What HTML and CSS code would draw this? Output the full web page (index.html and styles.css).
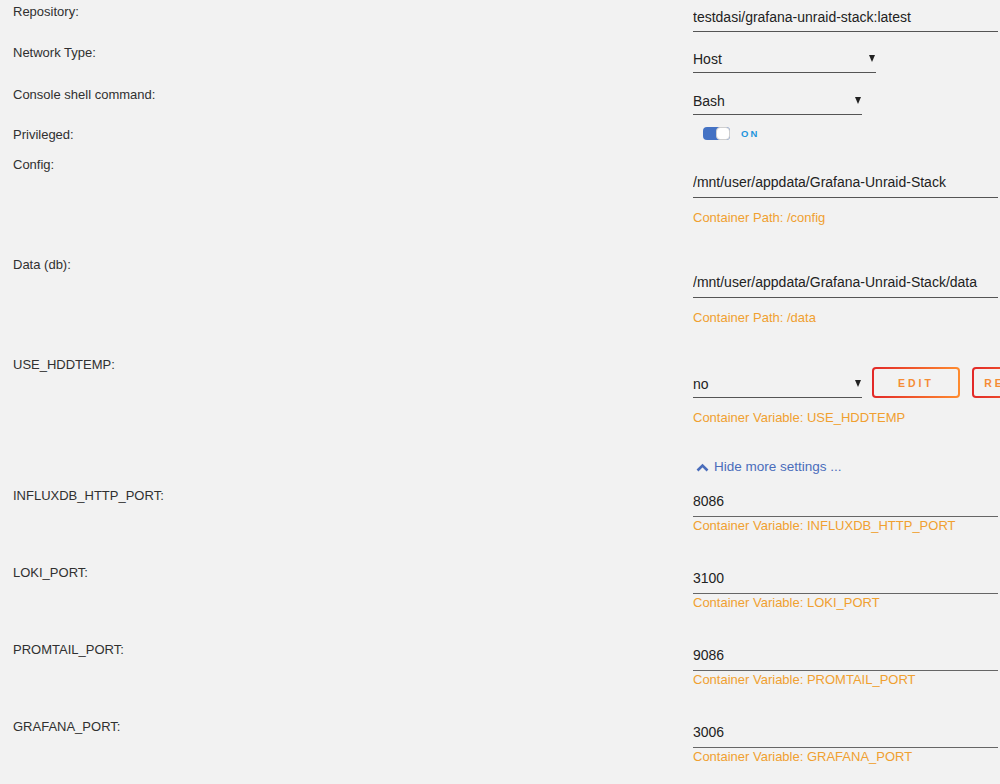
FILE: index.html
```html
<!DOCTYPE html>
<html lang="en">
<head>
  <meta charset="UTF-8" />
  <title>Update Container</title>
  <meta name="viewport" content="width=device-width, initial-scale=1" />
  <link rel="stylesheet" href="styles.css">
</head>
<body>

  <div class="form">

    <div class="row r-repo">
      <div class="label">Repository:</div>
      <div class="field">
        <input type="text" class="text wide" value="testdasi/grafana-unraid-stack:latest" />
      </div>
    </div>

    <div class="row r-net">
      <div class="label">Network Type:</div>
      <div class="field">
        <div class="select host"><span>Host</span></div>
      </div>
    </div>

    <div class="row r-shell">
      <div class="label">Console shell command:</div>
      <div class="field">
        <div class="select short"><span>Bash</span></div>
      </div>
    </div>

    <div class="row r-priv">
      <div class="label">Privileged:</div>
      <div class="field">
        <div class="switch">
          <span class="track"><span class="knob"></span></span>
          <span class="switch-text">ON</span>
        </div>
      </div>
    </div>

    <div class="row big">
      <div class="label">Config:</div>
      <div class="field">
        <input type="text" class="text wide" value="/mnt/user/appdata/Grafana-Unraid-Stack" />
        <div class="desc spaced">Container Path: /config</div>
      </div>
    </div>

    <div class="row big">
      <div class="label">Data (db):</div>
      <div class="field">
        <input type="text" class="text wide" value="/mnt/user/appdata/Grafana-Unraid-Stack/data" />
        <div class="desc spaced">Container Path: /data</div>
      </div>
    </div>

    <div class="row big r-hdd">
      <div class="label">USE_HDDTEMP:</div>
      <div class="field">
        <div class="inline">
          <div class="select short"><span>no</span></div>
          <button class="btn">EDIT</button>
          <button class="btn">REMOVE</button>
        </div>
        <div class="desc spaced">Container Variable: USE_HDDTEMP</div>
      </div>
    </div>

    <div class="row r-toggle">
      <div></div>
      <div class="field">
        <a class="more" href="#">
          <svg width="13" height="9" viewBox="0 0 13 9"><path d="M1.5 7.5 L6.5 2.5 L11.5 7.5" fill="none" stroke="#4a6dbb" stroke-width="2.6"/></svg>
          Hide more settings ...
        </a>
      </div>
    </div>

    <div class="row port">
      <div class="label">INFLUXDB_HTTP_PORT:</div>
      <div class="field">
        <input type="text" class="text wide" value="8086" />
        <div class="desc">Container Variable: INFLUXDB_HTTP_PORT</div>
      </div>
    </div>

    <div class="row port">
      <div class="label">LOKI_PORT:</div>
      <div class="field">
        <input type="text" class="text wide" value="3100" />
        <div class="desc">Container Variable: LOKI_PORT</div>
      </div>
    </div>

    <div class="row port">
      <div class="label">PROMTAIL_PORT:</div>
      <div class="field">
        <input type="text" class="text wide" value="9086" />
        <div class="desc">Container Variable: PROMTAIL_PORT</div>
      </div>
    </div>

    <div class="row port">
      <div class="label">GRAFANA_PORT:</div>
      <div class="field">
        <input type="text" class="text wide" value="3006" />
        <div class="desc">Container Variable: GRAFANA_PORT</div>
      </div>
    </div>

  </div>

</body>
</html>
```

FILE: styles.css
```css
html, body {
  margin: 0;
  overflow: hidden;
}
body {
  font-family: "Liberation Sans", Arial, sans-serif;
  background-color: #f2f2f2;
  color: #303030;
  padding-top: 3px;
}
.row {
  display: grid;
  grid-template-columns: 680px 320px;
  padding-left: 13px;
}
.label {
  font-size: 13px;
  line-height: 18px;
}
.field { min-width: 0; }

.text, .select {
  display: block;
  box-sizing: border-box;
  height: 29px;
  padding: 6px 0;
  margin: 0;
  font-family: inherit;
  font-size: 14px;
  line-height: 16px;
  color: #222;
  background: transparent;
  border: 0;
  border-bottom: 1px solid #555;
  outline: none;
}
.select { padding: 7px 0 5px; }
.big .text { padding: 5px 0 7px; }
.wide { width: 305px; }

.select { position: relative; }
.select::after {
  content: "";
  position: absolute;
  right: 1px;
  top: 11px;
  border-left: 3.5px solid transparent;
  border-right: 3.5px solid transparent;
  border-top: 7px solid #222;
}
.host { width: 183px; }
.short { width: 169px; }

.r-repo { margin-bottom: 12px; }
.r-net { margin-bottom: 13px; }
.r-shell { margin-bottom: 11px; }
.r-priv { height: 30px; }

/* toggle switch */
.switch {
  display: flex;
  align-items: center;
  margin: 1px 0 0 10px;
  height: 13px;
}
.track {
  position: relative;
  width: 27px;
  height: 13px;
  box-sizing: border-box;
  border-radius: 4px;
  background-color: #4472c4;
}
.knob {
  position: absolute;
  right: 0;
  top: 0;
  width: 14px;
  height: 13px;
  box-sizing: border-box;
  background: #fff;
  border: 1px solid #cfcfcf;
  border-radius: 4px;
}
.switch-text {
  margin-left: 11px;
  font-size: 9.5px;
  font-weight: bold;
  letter-spacing: 2px;
  color: #1f95dc;
}

.big { margin-bottom: 29px; }
.big .field { padding-top: 13px; }

.desc {
  font-size: 13px;
  line-height: 18px;
  color: #f0a030;
}
.spaced { margin-top: 11px; }

.inline {
  display: flex;
  align-items: flex-start;
}
.inline .select { flex: none; margin-right: 10px; }
.btn {
  flex: none;
  width: 88px;
  height: 31px;
  margin-top: -2px;
  margin-bottom: -2px;
  padding: 0;
  font-family: inherit;
  font-size: 10.5px;
  font-weight: bold;
  letter-spacing: 3px;
  color: #f58c35;
  border: 2px solid transparent;
  border-radius: 4px;
  background: linear-gradient(#f2f2f2, #f2f2f2) padding-box,
              linear-gradient(90deg, #e22828, #ff8c2f) border-box;
  cursor: pointer;
}
.btn + .btn { margin-left: 12px; }

.r-hdd { margin-bottom: 31px; }
.r-toggle { margin-bottom: 11px; }
.more {
  display: flex;
  align-items: center;
  gap: 5px;
  margin-left: 3px;
  font-size: 13.5px;
  line-height: 18px;
  color: #4a6dbb;
  text-decoration: none;
}

.port { margin-bottom: 29px; }
.port .field { padding-top: 0; }
.port .text { border-bottom-color: #666; height: 30px; padding: 6px 0 8px; }
```
